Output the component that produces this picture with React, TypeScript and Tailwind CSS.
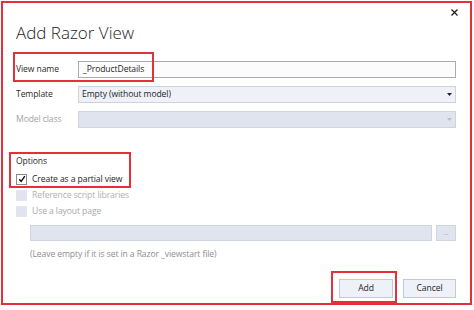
import React from "react";

const font = { fontFamily: '"Open Sans", "Noto Sans", sans-serif' };

function Arrow({ color }: { color: string }) {
  return (
    <svg width="5" height="3" viewBox="0 0 5 3" className="shrink-0">
      <path d="M0 0 L5 0 L2.5 3 Z" fill={color} />
    </svg>
  );
}

export default function App() {
  return (
    <div className="w-[474px] h-[310px] bg-white overflow-hidden" style={font}>
      <div className="relative ml-[1px] mt-[1px] w-[471px] h-[304px] border-2 border-[#e3313c] flex flex-col text-[8.6px] tracking-[-0.1px] text-[#2b2b2b]">
        {/* close */}
        <div className="absolute right-[12px] top-[6px] leading-none">
          <svg width="7" height="7" viewBox="0 0 7 7">
            <path d="M0.5 0.5 L6.5 6.5 M6.5 0.5 L0.5 6.5" stroke="#222" strokeWidth="1.3" />
          </svg>
        </div>

        {/* title */}
        <div className="pl-[13px] pt-[18px] text-[17px] leading-[24px] tracking-normal font-light text-[#1e1e1e]">
          Add Razor View
        </div>

        {/* form rows */}
        <div className="mt-[16px] flex flex-col gap-[8px] pl-[13px] pr-[14px]">
          <div className="flex items-center h-[17px]">
            <div className="w-[62px]">View name</div>
            <div className="flex-1 h-[17px] border border-[#a8abb0] bg-[#fcfcfd] flex items-center pl-[4px] text-[#1e1e1e]">
              _ProductDetails
            </div>
          </div>
          <div className="flex items-center h-[17px]">
            <div className="w-[62px]">Template</div>
            <div className="flex-1 h-[17px] border border-[#cdd3dd] bg-[#eef1f8] flex items-center pl-[3px] pr-[3px] text-[#1e1e1e]">
              <span className="flex-1">Empty (without model)</span>
              <Arrow color="#222" />
            </div>
          </div>
          <div className="flex items-center h-[17px]">
            <div className="w-[62px] text-[#a3a3a3]">Model class</div>
            <div className="flex-1 h-[17px] border border-[#cfd5df] bg-[#dfe4ee] flex items-center justify-end pr-[3px]">
              <Arrow color="#b9bec8" />
            </div>
          </div>
        </div>

        {/* options */}
        <div className="mt-[26px] pl-[13px] flex flex-col">
          <div className="h-[14px] flex items-center">Options</div>
          <div className="mt-[5px] flex flex-col gap-[4px]">
            <div className="flex items-center h-[12px]">
              <div className="w-[11px] h-[11px] border border-[#8a8a8a] bg-white flex items-center justify-center">
                <svg width="8" height="8" viewBox="0 0 8 8">
                  <path d="M1.2 4.2 L3.2 6.3 L6.8 1.2" stroke="#111" strokeWidth="1.4" fill="none" />
                </svg>
              </div>
              <span className="ml-[5px] text-[#1e1e1e]">Create as a partial view</span>
            </div>
            <div className="flex items-center h-[12px]">
              <div className="w-[11px] h-[11px] bg-[#dfe4ee]" />
              <span className="ml-[5px] text-[#b0b0b0]">Reference script libraries</span>
            </div>
            <div className="flex items-center h-[12px]">
              <div className="w-[11px] h-[11px] bg-[#dfe4ee]" />
              <span className="ml-[5px] text-[#a8a8a8]">Use a layout page</span>
            </div>
          </div>
          <div className="mt-[8px] ml-[14px] mr-[14px] flex gap-[4px]">
            <div className="flex-1 h-[16px] border border-[#cfd5df] bg-[#dfe4ee]" />
            <div className="w-[20px] h-[16px] border border-[#cfd5df] bg-[#dfe4ee] flex items-end justify-center pb-[4px]">
              <span className="text-[7px] leading-none text-[#a0a6b0]">...</span>
            </div>
          </div>
          <div className="mt-[7px] ml-[14px] text-[#8e8e8e]">
            (Leave empty if it is set in a Razor _viewstart file)
          </div>
        </div>

        {/* buttons */}
        <div className="mt-auto mb-[5px] flex justify-end gap-[10px] pr-[14px]">
          <div className="w-[54px] h-[19px] border border-[#c3c9d3] bg-[#eef1f8] flex items-center justify-center text-[#1e1e1e]">
            Add
          </div>
          <div className="w-[53px] h-[19px] border border-[#c3c9d3] bg-[#eef1f8] flex items-center justify-center text-[#1e1e1e]">
            Cancel
          </div>
        </div>

        {/* annotation boxes */}
        <div className="absolute left-[10px] top-[49px] w-[141px] h-[30px] border-2 border-[#e3313c]" />
        <div className="absolute left-[6px] top-[149px] w-[122px] h-[36px] border-2 border-[#e3313c]" />
        <div className="absolute left-[328px] top-[268px] w-[66px] h-[32px] border-2 border-[#e3313c]" />
      </div>
    </div>
  );
}
